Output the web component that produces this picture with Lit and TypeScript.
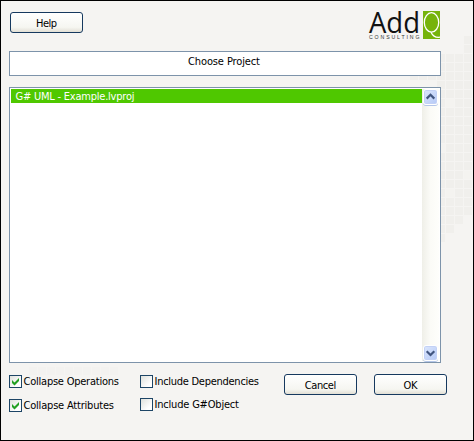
import { LitElement, html, css, svg } from "lit";
import { customElement, property } from "lit/decorators.js";

@customElement("push-button")
class PushButton extends LitElement {
  @property() label = "";
  @property({ type: Number }) span = 30;
  static styles = css`
    :host { display: block; width: 73px; height: 21px; }
    button {
      display: block; width: 73px; height: 21px; padding: 0; box-sizing: border-box;
      border: 1px solid #16395f; border-radius: 3px;
      background: linear-gradient(#ffffff, #f6f6f1 75%, #e2dfd5);
      color: #000;
    }
    svg { display: block; width: 71px; height: 19px; }
    text { font: 11px "DejaVu Sans Condensed", "DejaVu Sans", sans-serif; font-stretch: condensed; text-anchor: middle; }
  `;
  render() {
    return html`<button><svg viewBox="0 0 71 19">
      <text x="35.5" y="14" textLength=${this.span}>${this.label}</text>
    </svg></button>`;
  }
}

@customElement("check-option")
class CheckOption extends LitElement {
  @property() label = "";
  @property({ type: Boolean }) checked = false;
  @property({ type: Number }) span = 90;
  static styles = css`
    :host { display: flex; height: 13px; }
    .box {
      width: 13px; height: 13px; box-sizing: border-box; border: 1px solid #1d4566;
      background: linear-gradient(135deg, #dfe1dc, #ffffff 75%);
    }
    .box svg { display: block; }
    .label { display: block; overflow: visible; }
    text { font: 11px "DejaVu Sans Condensed", "DejaVu Sans", sans-serif; font-stretch: condensed; }
  `;
  render() {
    return html`
      <div class="box" role="checkbox" aria-checked=${this.checked}>
        <svg width="11" height="11" viewBox="0 0 11 11">
          ${this.checked ? svg`<path d="M2 4L4.5 6.5L9 2V5L4.5 9.4L2 7Z" fill="#22a022" />` : null}
        </svg>
      </div>
      <svg class="label" width="110" height="13"><text x="1.5" y="10" textLength=${this.span}>${this.label}</text></svg>`;
  }
}

@customElement("app-root")
class AppRoot extends LitElement {
  static styles = css`
    :host {
      display: block; width: 474px; height: 441px; box-sizing: border-box;
      border: 1px solid #000; background: #f5f4f2; overflow: hidden; position: relative;
      font: 11px "DejaVu Sans Condensed", "DejaVu Sans", sans-serif;
    }
    .mosaic { position: absolute; left: 0; top: 0; }
    main { position: relative; display: flex; flex-direction: column; padding: 9px 32px 0 8px; }
    header { display: flex; justify-content: space-between; height: 41px; }
    header push-button { margin: 2px 0 0 1px; }
    .logo { display: block; overflow: visible; }
    .title {
      height: 25px; box-sizing: border-box; border: 1px solid #7d93aa; background: #fff;
    }
    .title svg, .row svg { display: block; }
    text { font: 11px "DejaVu Sans Condensed", "DejaVu Sans", sans-serif; font-stretch: condensed; }
    text.add { font: 29px "Open Sans", "Noto Sans", sans-serif; fill: #111; }
    text.sub { font: 5.2px "Liberation Sans", sans-serif; fill: #333; }
    .list {
      display: flex; margin-top: 11px; height: 276px; box-sizing: border-box;
      border: 1px solid #7d93aa; background: #fff; padding: 1px;
    }
    .rows { flex: 1; }
    .row { height: 14px; background: #4fc800; }
    .row text { fill: #fff; }
    .scroll {
      display: flex; flex-direction: column; justify-content: space-between; align-items: center;
      width: 17px; box-sizing: border-box;
      background: linear-gradient(90deg, #efefe8, #fbfbf7 50%, #fefefb);
    }
    .arrow {
      width: 15px; height: 16px; box-sizing: border-box; border: 1px solid #fff;
      border-radius: 3px; background: linear-gradient(135deg, #dce7fd, #b5c9f6);
      box-shadow: inset 0 0 0 1px #c3d1f5, 0 1px 0 #b4c6e8;
    }
    .arrow svg { display: block; }
    footer { display: flex; margin-top: 11px; width: 440px; }
    .col { display: flex; flex-direction: column; gap: 11px; margin-top: 1px; width: 131px; }
    .col.second { gap: 10px; width: 144px; }
    .ok { margin-left: 17px; }
  `;

  tiles() {
    const out = [];
    // First and last tile row of each column, left to right.
    const spans = [[4, 4], [4, 4], [4, 4], [2, 22], [2, 21], [2, 20], [0, 19]];
    const pale = ["4,7", "6,15", "4,17", "3,12"];
    spans.forEach(([from, to], c) => {
      for (let r = from; r <= to; r++) {
        out.push(svg`<rect x=${409 + c * 9} y=${35 + r * 9} width="8" height="8"
          fill=${pale.includes(`${c},${r}`) ? "#f4f3f0" : "#f0efec"} />`);
      }
    });
    for (let c = 0; c < 10; c++) {
      out.push(svg`<rect x=${28 + c * 9} y="366" width="8" height="8" fill="#f3f2f0" />`);
    }
    return out;
  }

  render() {
    return html`
      <svg class="mosaic" width="472" height="439">${this.tiles()}</svg>
      <main>
        <header>
          <push-button label="Help" .span=${21}></push-button>
          <svg class="logo" width="74" height="32" viewBox="367 10 74 32">
            <rect x="423" y="11" width="17" height="28" fill="#76b30b" />
            <text class="add" x="369" y="32.7" textLength="51" lengthAdjust="spacingAndGlyphs">Add</text>
            <text class="sub" x="369" y="38.8" textLength="50.5">CONSULTING</text>
            <ellipse cx="431.5" cy="22.4" rx="7.2" ry="9.7" fill="none" stroke="#fff" stroke-width="1.3" />
            <path d="M431 32.2C433 36.5 436 37.8 440 37.2" fill="none" stroke="#fff" stroke-width="1.3" />
          </svg>
        </header>
        <div class="title"><svg width="430" height="23"><text x="178" y="13" textLength="72">Choose Project</text></svg></div>
        <div class="list">
          <div class="rows">
            <div class="row"><svg width="411" height="14"><text x="4.5" y="11" textLength="119">G# UML - Example.lvproj</text></svg></div>
          </div>
          <div class="scroll">
            <div class="arrow"><svg width="13" height="14"><path d="M2.7 8.6L6.5 4.8L10.3 8.6" fill="none" stroke="#41557f" stroke-width="2.2" /></svg></div>
            <div class="arrow"><svg width="13" height="14"><path d="M2.7 5.2L6.5 9L10.3 5.2" fill="none" stroke="#41557f" stroke-width="2.2" /></svg></div>
          </div>
        </div>
        <footer>
          <div class="col">
            <check-option checked label="Collapse Operations" .span=${95.5}></check-option>
            <check-option checked label="Collapse Attributes" .span=${90.5}></check-option>
          </div>
          <div class="col second">
            <check-option label="Include Dependencies" .span=${104.5}></check-option>
            <check-option label="Include G#Object" .span=${84.5}></check-option>
          </div>
          <push-button label="Cancel" .span=${31.5}></push-button>
          <push-button class="ok" label="OK" .span=${14}></push-button>
        </footer>
      </main>`;
  }
}
